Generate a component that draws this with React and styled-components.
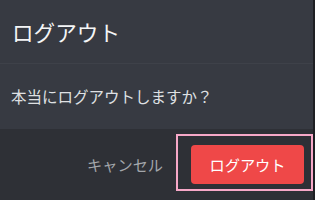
import React from "react";
import styled, { createGlobalStyle } from "styled-components";

const GlobalStyle = createGlobalStyle`
  html, body {
    margin: 0;
    padding: 0;
    background: #1e1f23;
  }
  body {
    font-family: "Noto Sans CJK JP", "Noto Sans", sans-serif;
  }
`;

const Screen = styled.div`
  position: relative;
  width: 315px;
  height: 200px;
  display: flex;
  background: #1e1f23;
  overflow: hidden;
`;

const Dialog = styled.div`
  width: 313px;
  height: 200px;
  display: flex;
  flex-direction: column;
  background: #373a42;
`;

const Header = styled.div`
  height: 63px;
  display: flex;
  align-items: center;
  padding: 0 12px;
  border-bottom: 1px solid #3e4149;
  box-sizing: content-box;
`;

const Title = styled.h2`
  margin: 0;
  font-size: 21.6px;
  font-weight: 400;
  color: #f4f5f6;
  line-height: 1;
`;

const Body = styled.div`
  height: 65px;
  display: flex;
  align-items: center;
  padding: 0 11px;
`;

const Message = styled.p`
  margin: 0;
  font-size: 15.5px;
  color: #dfe0e3;
  line-height: 1;
`;

const Footer = styled.div`
  flex: 1;
  display: flex;
  justify-content: flex-end;
  align-items: flex-start;
  gap: 14px;
  padding: 16px 9px 0 0;
  background: #2e3036;
`;

const Button = styled.button`
  height: 39px;
  border: none;
  border-radius: 4px;
  font-family: inherit;
  font-size: 15.2px;
  line-height: 1;
  cursor: pointer;
  padding: 0 ${(p) => (p.$primary ? "0" : "14px")};
  width: ${(p) => (p.$primary ? "113px" : "auto")};
  background: ${(p) => (p.$primary ? "#ef4848" : "transparent")};
  color: ${(p) => (p.$primary ? "#ffffff" : "#a3a6ab")};
`;

const Highlight = styled.div`
  position: absolute;
  left: 176px;
  top: 134px;
  width: 137px;
  height: 57px;
  border: 2px solid #f7a8c8;
  box-sizing: border-box;
  pointer-events: none;
`;

export default function App() {
  return (
    <>
      <GlobalStyle />
      <Screen>
        <Dialog>
          <Header>
            <Title>ログアウト</Title>
          </Header>
          <Body>
            <Message>本当にログアウトしますか？</Message>
          </Body>
          <Footer>
            <Button>キャンセル</Button>
            <Button $primary>ログアウト</Button>
          </Footer>
        </Dialog>
        <Highlight />
      </Screen>
    </>
  );
}
